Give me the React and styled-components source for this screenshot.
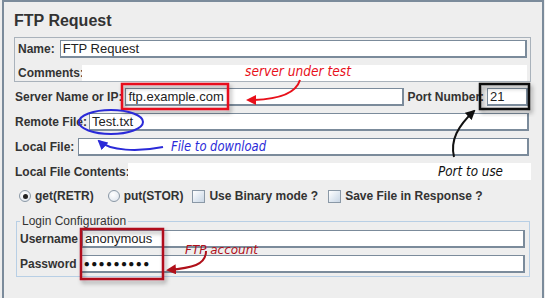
import React from 'react';
import styled, { createGlobalStyle } from 'styled-components';

const GlobalStyle = createGlobalStyle`
  html, body {
    margin: 0;
    padding: 0;
    background: #eeeeee;
  }
  body {
    font-family: "Liberation Sans", Arial, sans-serif;
  }
`;

const Page = styled.div`
  position: relative;
  width: 545px;
  height: 298px;
  overflow: hidden;
  background: #eeeeee;
`;

const Panel = styled.div`
  box-sizing: border-box;
  margin-left: 2px;
  width: 542px;
  height: 298px;
  border: 2px solid #7b8b9b;
  border-bottom: none;
  padding: 10px 11px 0 10px;
  display: flex;
  flex-direction: column;
  color: #333333;
`;

const Title = styled.h2`
  margin: 0;
  font-size: 16px;
  line-height: 18px;
  font-weight: bold;
  color: #333333;
`;

const NameGroup = styled.div`
  margin-top: 7px;
  border: 1px solid #a9b2bb;
  padding: 1px 3px 0 2px;
  display: flex;
  flex-direction: column;
`;

const Row = styled.div`
  display: flex;
  align-items: center;
  gap: ${(p) => p.$gap ?? 4}px;
  margin-top: ${(p) => p.$top ?? 0}px;
  padding-left: ${(p) => p.$left ?? 0}px;
  padding-right: ${(p) => p.$right ?? 0}px;
`;

const Label = styled.span`
  flex: none;
  ${(p) => (p.$w ? `width: ${p.$w}px;` : '')}
  font-size: 12px;
  font-weight: bold;
  line-height: 14px;
  white-space: nowrap;
  color: #333333;
`;

const Field = styled.div`
  box-sizing: border-box;
  height: 18px;
  ${(p) => (p.$width ? `width: ${p.$width}px; flex: none;` : 'flex: 1;')}
  background: #ffffff;
  border-style: solid;
  border-color: #7b8b9b;
  border-width: 1px 2px 2px 1px;
  padding-left: 2px;
  font-size: 13px;
  line-height: 15px;
  color: #222222;
  white-space: nowrap;
  overflow: hidden;
`;

const Secret = styled(Field)`
  font-size: 10px;
  letter-spacing: 1.4px;
  font-weight: bold;
  line-height: 15px;
  color: #111111;
`;

const TextArea = styled.div`
  flex: 1;
  height: ${(p) => p.$h ?? 16}px;
  background: #ffffff;
`;

const Options = styled.div`
  display: flex;
  align-items: center;
  margin-top: 9px;
  padding-left: 5px;
  height: 14px;
`;

const Option = styled.label`
  display: flex;
  align-items: center;
  gap: 4px;
  margin-right: ${(p) => p.$after ?? 10}px;
`;

const Radio = styled.span`
  box-sizing: border-box;
  width: 12px;
  height: 12px;
  border-radius: 50%;
  border: 1px solid #8a98a6;
  background: radial-gradient(circle at 40% 35%, #ffffff 0%, #e6ebf1 70%, #cfd8e2 100%);
  display: flex;
  align-items: center;
  justify-content: center;
  &::after {
    content: '';
    width: 5px;
    height: 5px;
    border-radius: 50%;
    background: ${(p) => (p.$on ? '#222222' : 'transparent')};
  }
`;

const Check = styled.span`
  box-sizing: border-box;
  width: 13px;
  height: 13px;
  border: 1px solid #8a98a6;
  background: linear-gradient(135deg, #ffffff 0%, #dde6f0 60%, #c9d6e4 100%);
`;

const LoginSet = styled.fieldset`
  margin: 11px 1px 0 2px;
  padding: 2px 4px 3px 3px;
  border: 1px solid #b8cfe5;
  display: flex;
  flex-direction: column;
  min-width: 0;
`;

const Legend = styled.legend`
  padding: 0 2px;
  font-size: 12px;
  line-height: 14px;
  color: #333333;
`;

const Overlay = styled.svg`
  position: absolute;
  left: 0;
  top: 0;
  pointer-events: none;
`;

const noteFont = '"DejaVu Sans", "Liberation Sans", sans-serif';

function Annotations() {
  return (
    <Overlay width="545" height="298" viewBox="0 0 545 298">
      <defs>
        <filter id="shade" x="-20%" y="-20%" width="140%" height="150%">
          <feDropShadow dx="2" dy="3" stdDeviation="2" floodColor="#000" floodOpacity="0.35" />
        </filter>
        {[
          ['red', '#e8101a'],
          ['blue', '#2a2ad8'],
          ['black', '#111111'],
          ['dred', '#b0101a'],
        ].map(([id, c]) => (
          <marker key={id} id={`arr-${id}`} viewBox="0 0 10 10" refX="8" refY="5"
            markerWidth="5" markerHeight="5" orient="auto">
            <path d="M0,0 L10,5 L0,10 z" fill={c} />
          </marker>
        ))}
      </defs>

      {/* server under test */}
      <rect x="122" y="84" width="106" height="25" fill="none" stroke="#e8101a" strokeWidth="2.5" filter="url(#shade)" />
      <text x="245" y="76" fill="#e8101a" fontFamily={noteFont} fontStyle="italic" fontSize="14"
        textLength="106" lengthAdjust="spacingAndGlyphs">server under test</text>
      <path d="M300,80 C296,93 278,100 248,100" fill="none" stroke="#e8101a" strokeWidth="2"
        markerEnd="url(#arr-red)" />

      {/* port */}
      <rect x="480" y="84" width="49" height="25" fill="none" stroke="#111" strokeWidth="2.5" filter="url(#shade)" />
      <text x="438" y="176" fill="#111" fontFamily={noteFont} fontStyle="italic" fontSize="14"
        textLength="65" lengthAdjust="spacingAndGlyphs">Port to use</text>
      <path d="M454,157 C450,140 458,126 474,111" fill="none" stroke="#111" strokeWidth="2"
        markerEnd="url(#arr-black)" />

      {/* remote file */}
      <ellipse cx="111" cy="122" rx="32" ry="12" fill="none" stroke="#2a2ad8" strokeWidth="2" />
      <text x="171" y="151" fill="#2a2ad8" fontFamily={noteFont} fontStyle="italic" fontSize="14"
        textLength="95" lengthAdjust="spacingAndGlyphs">File to download</text>
      <path d="M163,147 C138,152 110,151 99,141" fill="none" stroke="#2a2ad8" strokeWidth="2"
        markerEnd="url(#arr-blue)" />

      {/* login */}
      <rect x="81" y="229" width="82" height="50" fill="none" stroke="#b0101a" strokeWidth="2.5" filter="url(#shade)" />
      <text x="185" y="254" fill="#b0101a" fontFamily={noteFont} fontStyle="italic" fontSize="13"
        textLength="73" lengthAdjust="spacingAndGlyphs">FTP account</text>
      <path d="M206,251 C206,265 192,268 168,270" fill="none" stroke="#b0101a" strokeWidth="2"
        markerEnd="url(#arr-dred)" />
    </Overlay>
  );
}

export default function App() {
  return (
    <>
      <GlobalStyle />
      <Page>
        <Panel>
          <Title>FTP Request</Title>

          <NameGroup>
            <Row $gap={5} $top={1} $left={1}>
              <Label>Name:</Label>
              <Field>FTP Request</Field>
            </Row>
            <Row $gap={1} $top={7} $left={1}>
              <Label $w={63}>Comments:</Label>
              <TextArea />
            </Row>
          </NameGroup>

          <Row $gap={3} $top={6} $left={1} $right={3}>
            <Label>Server Name or IP:</Label>
            <Field $width={279}>ftp.example.com</Field>
            <Label>Port Number:</Label>
            <Field>21</Field>
          </Row>
          <Row $gap={2} $top={7} $left={1} $right={2}>
            <Label>Remote File:</Label>
            <Field>Test.txt</Field>
          </Row>
          <Row $gap={4} $top={7} $left={1} $right={2}>
            <Label>Local File:</Label>
            <Field />
          </Row>
          <Row $gap={3} $top={7} $left={1}>
            <Label $w={110}>Local File Contents:</Label>
            <TextArea $h={17} />
          </Row>

          <Options>
            <Option $after={14}>
              <Radio $on />
              <Label>get(RETR)</Label>
            </Option>
            <Option $after={9}>
              <Radio />
              <Label>put(STOR)</Label>
            </Option>
            <Option $after={10}>
              <Check />
              <Label>Use Binary mode ?</Label>
            </Option>
            <Option>
              <Check />
              <Label>Save File in Response ?</Label>
            </Option>
          </Options>

          <LoginSet>
            <Legend>Login Configuration</Legend>
            <Row $gap={4}>
              <Label>Username</Label>
              <Field>anonymous</Field>
            </Row>
            <Row $gap={4} $top={7}>
              <Label>Password</Label>
              <Secret>●●●●●●●●●</Secret>
            </Row>
          </LoginSet>
        </Panel>
        <Annotations />
      </Page>
    </>
  );
}
